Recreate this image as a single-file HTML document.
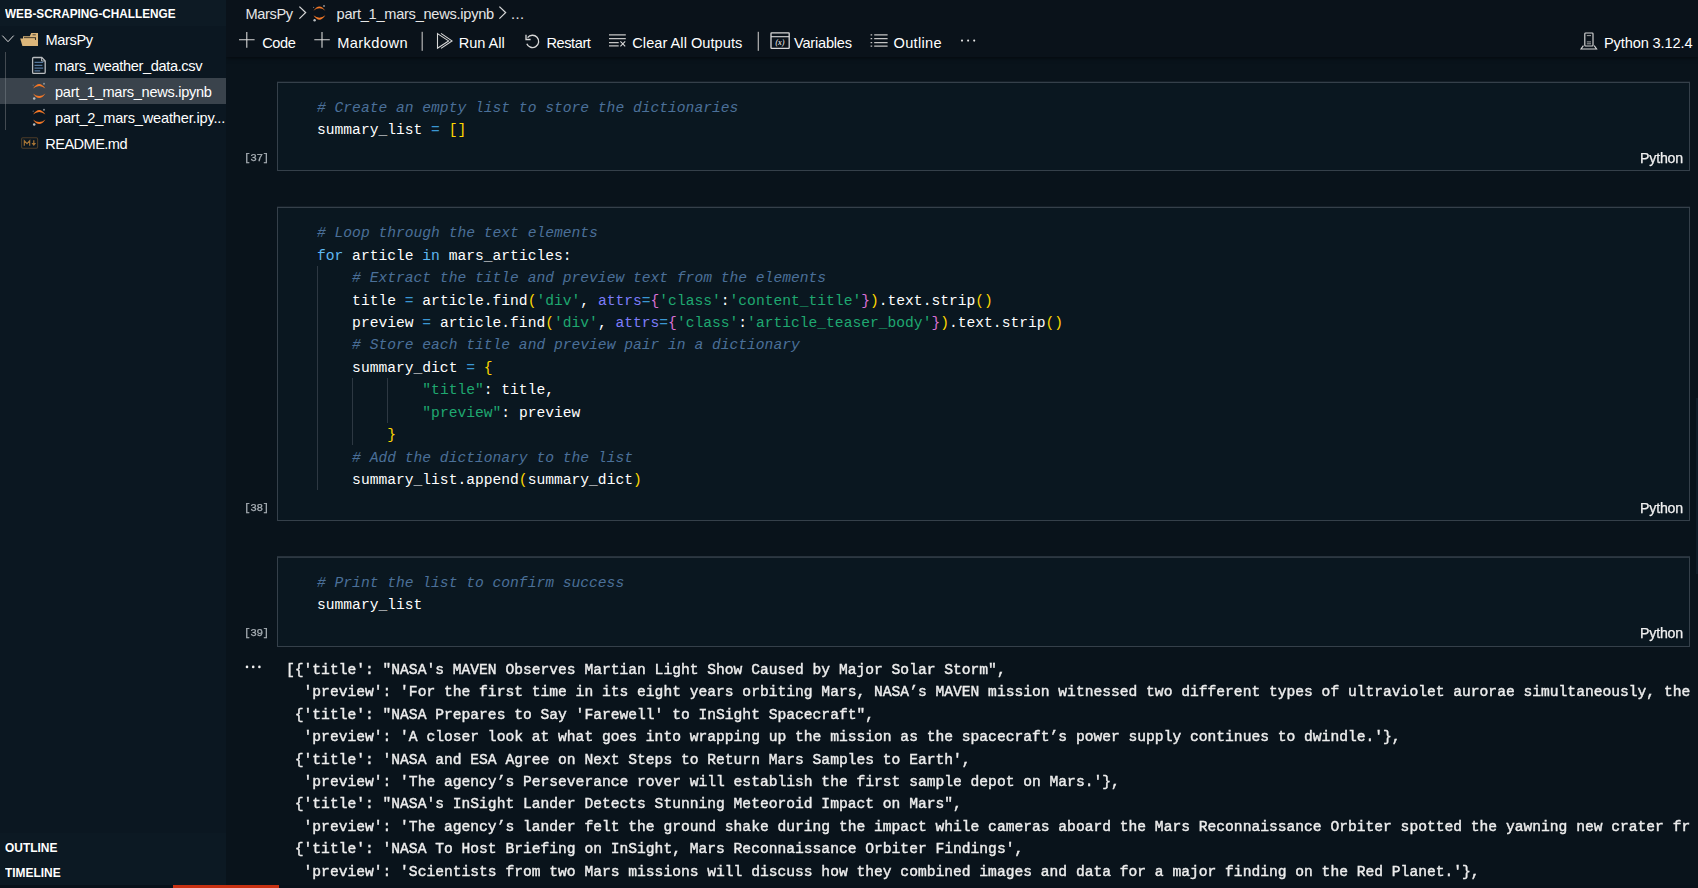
<!DOCTYPE html>
<html lang="en">
<head>
<meta charset="utf-8">
<title>part_1_mars_news.ipynb - Visual Studio Code</title>
<style>
*{box-sizing:border-box;margin:0;padding:0}
html,body{width:1698px;height:888px;overflow:hidden;background:#09131b}
body{position:relative;font-family:"Liberation Sans",sans-serif;color:#fff;font-size:14.6px}
.abs{position:absolute}
/* sidebar */
#side{position:absolute;left:0;top:0;width:226px;height:888px;background:#0b1721}
#side .hdr{position:absolute;left:5px;height:26px;font-weight:bold;font-size:13.2px;line-height:26px;white-space:nowrap;transform-origin:0 50%;transform:scaleX(0.892)}
#side .hdrbg{position:absolute;left:0;width:226px;height:26px;background:#0b1721}
.row{position:absolute;left:0;width:226px;height:26px;line-height:28px;white-space:nowrap;font-size:14.6px;letter-spacing:-0.2px}
.row.sel{background:#3a434c}
.row span.t{position:absolute;top:0}
.row svg{position:absolute}
/* editor */
#ed{position:absolute;left:226px;top:0;width:1472px;height:888px;background:#09131b;overflow:hidden}
#top{position:absolute;left:0;top:0;width:1472px;height:57px;background:#0a121a;box-shadow:0 1px 4px rgba(0,0,0,.55)}
.ui{position:absolute;white-space:nowrap;font-size:14.6px;line-height:20px;letter-spacing:-0.2px;color:#fff}
.bc{color:#e6e6e6}
.cell{position:absolute;left:51px;width:1413px;background:#0a1720;border:1px solid #35404a;box-shadow:0 -1px 0 rgba(53,64,74,.28)}
.code{position:absolute;left:91px;font-family:"Liberation Mono",monospace;font-size:14.63px;line-height:22.45px;white-space:pre;color:#fff}
.code div{height:22.45px}
.out{position:absolute;left:59.5px;font-family:"Liberation Mono",monospace;font-size:14.63px;line-height:22.4px;white-space:pre;color:#ededed;will-change:transform;-webkit-text-stroke:0.42px #ededed}
.out div{height:22.4px}
.cnt{will-change:transform;-webkit-text-stroke:0.25px #a9b0b6;position:absolute;font-family:"Liberation Mono",monospace;font-size:11px;color:#a9b0b6;white-space:nowrap;line-height:12px;letter-spacing:-0.4px}
.lang{will-change:transform;-webkit-text-stroke:0.25px #f0f0f0;position:absolute;font-size:14.2px;color:#f0f0f0;white-space:nowrap;line-height:16px;letter-spacing:-0.2px}
.c{color:#4b7099;font-style:italic}
.k{color:#5fb8f2}
.o{color:#3b97d4}
.s{color:#1fa870}
.y{color:#ffd700}
.p{color:#da70d6}
.a{color:#7d7dfa}
.guide{position:absolute;width:1px;background:#2d3842}
</style>
</head>
<body>
<div id="side">
  <div class="hdrbg" style="top:0;background:#0d1a24"></div>
  <div class="hdr" style="top:1.2px">WEB-SCRAPING-CHALLENGE</div>
  <div class="row" style="top:26px"><span class="t" style="left:45.5px;letter-spacing:-0.38px">MarsPy</span></div>
  <div class="row" style="top:52px"><span class="t" style="left:54.8px;letter-spacing:-0.36px">mars_weather_data.csv</span></div>
  <div class="row sel" style="top:78px"><span class="t" style="left:55px;letter-spacing:-0.29px">part_1_mars_news.ipynb</span></div>
  <div class="row" style="top:104px"><span class="t" style="left:55px;letter-spacing:-0.19px">part_2_mars_weather.ipy...</span></div>
  <div class="row" style="top:130px"><span class="t" style="left:45.3px;letter-spacing:-0.56px">README.md</span></div>
  <div class="guide" style="left:5px;top:52px;height:78px;background:#434a51"></div><div class="guide" style="left:5px;top:78px;height:26px;background:#59626a"></div>
  <svg class="abs" style="left:0;top:26px" width="60" height="130" viewBox="0 26 60 130">
    <!-- chevron -->
    <path d="M2.3 35.6 L8 41.7 L13.7 35.6" fill="none" stroke="#dcdcdc" stroke-width="1"/>
    <!-- folder open -->
    <path d="M23 36.3 L29.8 36.3 L31.2 33 L38 33 L38 46 L23.2 46 Z" fill="#dcb67a"/>
    <rect x="32.5" y="34.1" width="3.3" height="1.3" fill="#6f6048"/>
    <path d="M24 37.8 L35.4 37.8 L35.4 40" fill="none" stroke="#2e2a22" stroke-width="1.1"/>
    <path d="M20.2 38.6 L34.8 38.6 L36.6 46 L22.4 46 Z" fill="#dcb67a"/>
    <!-- file icon -->
    <path d="M33.6 57.5 L41.8 57.5 L45.2 60.9 L45.2 72.2 Q45.2 73.4 44 73.4 L33.6 73.4 Q32.6 73.4 32.6 72.2 L32.6 58.6 Q32.6 57.5 33.6 57.5 Z" fill="none" stroke="#b9bcbf" stroke-width="1.3"/>
    <path d="M41.6 57.6 L41.6 61 L45 61" fill="none" stroke="#b9bcbf" stroke-width="1"/>
    <path d="M34.5 62.4 H43.2 M34.5 65.3 H42.4 M34.5 68.1 H43.2 M34.5 70.8 H40.2" stroke="#56779c" stroke-width="1.2" fill="none"/>
    <!-- jupyter 1 -->
    <g id="jup">
      <path d="M33 88.6 Q39.2 79.6 45.4 88.6 Q39.2 83.6 33 88.6 Z" fill="#f37726"/>
      <path d="M33 93.4 Q39.2 102.6 45.4 93.4 Q39.2 98.6 33 93.4 Z" fill="#f37726"/>
      <circle cx="44" cy="83.7" r="0.95" fill="#8f969c"/>
      <circle cx="33.2" cy="85.2" r="0.6" fill="#6a737b"/>
      <circle cx="34.2" cy="98.6" r="1.25" fill="#b9bdc1"/>
    </g>
    <use href="#jup" y="26"/>
    <!-- markdown -->
    <rect x="21.6" y="137.7" width="16" height="10.6" rx="1.2" fill="none" stroke="#4d3d28" stroke-width="1.1"/>
    <path d="M24.3 145.7 V140.7 L27 143.7 L29.7 140.7 V145.7" fill="none" stroke="#a87636" stroke-width="1.15"/>
    <path d="M33.8 140.2 V143.2" fill="none" stroke="#a87636" stroke-width="1.2"/><path d="M31.5 143 H36.1 L33.8 146 Z" fill="#a87636"/>
  </svg>
  <div class="hdrbg" style="top:833px;height:52px;background:#0c1923"></div>
  <div class="hdr" style="top:834.6px;transform:scaleX(0.905)">OUTLINE</div>
  <div class="hdr" style="top:860.4px;transform:scaleX(0.905)">TIMELINE</div>
</div>
<div id="ed"><div id="edc" style="position:absolute;left:-226px;top:0;width:1698px;height:888px">
  <div id="top" style="left:226px"></div>
  <!-- breadcrumbs -->
  <div class="ui bc" style="left:245.6px;top:3.7px;letter-spacing:-0.38px" id="bc1">MarsPy</div>
  <div class="ui bc" style="left:336.6px;top:3.7px;letter-spacing:-0.26px" id="bc2">part_1_mars_news.ipynb</div>
  <div class="ui bc" style="left:511px;top:3.7px;letter-spacing:0.4px" id="bc3">...</div>
  <!-- toolbar -->
  <div class="ui" style="left:262.2px;top:33.2px;letter-spacing:-0.40px" id="tb1">Code</div>
  <div class="ui" style="left:337.2px;top:33.2px;letter-spacing:0.43px" id="tb2">Markdown</div>
  <div class="ui" style="left:458.8px;top:33.2px;letter-spacing:-0.05px" id="tb3">Run All</div>
  <div class="ui" style="left:546.4px;top:33.2px;letter-spacing:-0.42px" id="tb4">Restart</div>
  <div class="ui" style="left:632.3px;top:33.2px;letter-spacing:0.03px" id="tb5">Clear All Outputs</div>
  <div class="ui" style="left:794px;top:33.2px;letter-spacing:-0.21px" id="tb6">Variables</div>
  <div class="ui" style="left:893.6px;top:33.2px;letter-spacing:0.28px" id="tb7">Outline</div>
  <div class="ui" style="left:1604px;top:33.2px;letter-spacing:-0.125px" id="tb8">Python 3.12.4</div>
  <svg class="abs" style="left:226px;top:0" width="1472" height="57" viewBox="226 0 1472 57">
    <g fill="none" stroke="#d8d8d8" stroke-width="1.1">
      <!-- breadcrumb chevrons -->
      <path d="M299.4 6.6 L305.6 12.6 L299.4 18.6" stroke-width="1.3"/>
      <path d="M499.4 6.6 L505.6 12.6 L499.4 18.6" stroke-width="1.3"/>
      <!-- plus icons -->
      <path d="M239 39.8 H254.6 M246.8 32 V47.7"/>
      <path d="M314.3 39.8 H329.8 M322 32 V47.7"/>
      <!-- run all -->
      <path d="M437.5 33.6 L448.6 40.9 L437.5 48.2 Z"/>
      <path d="M441 33.4 L452 40.9 L441 48.4"/>
      <!-- restart -->
      <path d="M527.6 37.7 A6.15 6.15 0 1 1 526.8 43.7" stroke-width="1.35"/>
      <path d="M526 34.8 V39.5 H530.6" stroke-width="1.3"/>
      <!-- clear all -->
      <path d="M609 34.9 H625.8 M609 38.7 H625.8 M609 42.5 H618.7 M609 45.9 H618.7" stroke-width="1.25" stroke="#c4c4c4"/>
      <path d="M620.4 41.4 L625.2 46.4 M625.2 41.4 L620.4 46.4" stroke-width="1.1"/>
      <!-- variables -->
      <rect x="771" y="32.9" width="18.2" height="15.4" rx="0.6"  stroke-width="1.3"/>
      <path d="M771 36.7 H789.2" stroke-width="1.1"/>
      <!-- outline -->
      <path d="M874.2 34.9 H887.6 M874.2 38.7 H887.6 M874.2 42.5 H887.6 M874.2 46.1 H887.6" stroke-width="1.25" stroke="#c4c4c4"/>
      <path d="M870.6 34.9 H872.2 M870.6 38.7 H872.2 M870.6 42.5 H872.2 M870.6 46.1 H872.2" stroke-width="1.25" stroke="#c4c4c4"/>
      <!-- kernel -->
      <rect x="1584.8" y="33" width="8.2" height="13" rx="0.8" stroke-width="1.15"/>
      <path d="M1583.4 45.6 L1581 49 H1596.6 L1594.2 45.6" stroke-width="1.1"/>
      <path d="M1586.8 35.6 H1591 M1586.8 41.9 H1591 M1586.8 43.8 H1591" stroke-width="0.9" stroke="#b0b0b0"/>
    </g>
    <!-- separators -->
    <rect x="421.6" y="31.8" width="1.2" height="19" fill="#b4b4b4"/>
    <rect x="757.7" y="31.8" width="1.2" height="19" fill="#b4b4b4"/>
    <!-- more dots -->
    <g fill="#e4e4e4"><circle cx="962" cy="40.6" r="1.05"/><circle cx="968.1" cy="40.6" r="1.05"/><circle cx="974.2" cy="40.6" r="1.05"/></g>
    <!-- variables (x) text -->
    <text x="780.1" y="45.1" font-family="Liberation Serif, serif" font-style="italic" font-size="7.6" font-weight="bold" fill="#d8d8d8" text-anchor="middle" letter-spacing="0.3">(x)</text>
    <!-- jupyter breadcrumb -->
    <g transform="translate(319.4 13) scale(0.96) translate(-39.2 -91)">
      <path d="M33 88.6 Q39.2 79.6 45.4 88.6 Q39.2 83.6 33 88.6 Z" fill="#f37726"/>
      <path d="M33 93.4 Q39.2 102.6 45.4 93.4 Q39.2 98.6 33 93.4 Z" fill="#f37726"/>
      <circle cx="44" cy="83.7" r="0.95" fill="#8f969c"/>
      <circle cx="33.2" cy="85.2" r="0.6" fill="#6a737b"/>
      <circle cx="34.2" cy="98.6" r="1.25" fill="#b9bdc1"/>
    </g>
  </svg>

  <!-- cell 1 -->
  <div class="cell" style="left:277px;top:82px;height:89px"></div>
  <div class="code" style="left:317px;top:96.8px"><div><span class="c"># Create an empty list to store the dictionaries</span></div><div>summary_list <span class="o">=</span> <span class="y">[]</span></div></div>
  <div class="cnt" style="left:244.4px;top:152px">[37]</div>
  <div class="lang" style="left:1640.4px;top:150.3px">Python</div>

  <!-- cell 2 -->
  <div class="cell" style="left:277px;top:207px;height:314px"></div>
  <div class="guide" style="left:317px;top:266px;height:224px"></div>
  <div class="guide" style="left:352px;top:378px;height:67px"></div>
  <div class="guide" style="left:387px;top:378px;height:45px"></div>
  <div class="code" style="left:317px;top:222.2px"><div><span class="c"># Loop through the text elements</span></div><div><span class="k">for</span> article <span class="k">in</span> mars_articles:</div><div>    <span class="c"># Extract the title and preview text from the elements</span></div><div>    title <span class="o">=</span> article.find<span class="y">(</span><span class="s">'div'</span>, <span class="a">attrs</span><span class="o">=</span><span class="p">{</span><span class="s">'class'</span>:<span class="s">'content_title'</span><span class="p">}</span><span class="y">)</span>.text.strip<span class="y">()</span></div><div>    preview <span class="o">=</span> article.find<span class="y">(</span><span class="s">'div'</span>, <span class="a">attrs</span><span class="o">=</span><span class="p">{</span><span class="s">'class'</span>:<span class="s">'article_teaser_body'</span><span class="p">}</span><span class="y">)</span>.text.strip<span class="y">()</span></div><div>    <span class="c"># Store each title and preview pair in a dictionary</span></div><div>    summary_dict <span class="o">=</span> <span class="y">{</span></div><div>            <span class="s">"title"</span>: title,</div><div>            <span class="s">"preview"</span>: preview</div><div>        <span class="y">}</span></div><div>    <span class="c"># Add the dictionary to the list</span></div><div>    summary_list.append<span class="y">(</span>summary_dict<span class="y">)</span></div></div>
  <div class="cnt" style="left:244.4px;top:502px">[38]</div>
  <div class="lang" style="left:1640.4px;top:500.3px">Python</div>

  <!-- cell 3 -->
  <div class="cell" style="left:277px;top:557px;height:90px;box-shadow:0 -1px 0 rgba(53,64,74,.7);border-top-color:#2d3842"></div>
  <div class="code" style="left:317px;top:571.8px"><div><span class="c"># Print the list to confirm success</span></div><div>summary_list</div></div>
  <div class="cnt" style="left:244.4px;top:626.9px">[39]</div>
  <div class="lang" style="left:1640.4px;top:624.7px">Python</div>

  <!-- output -->
  <div class="out" style="left:286.3px;top:658.6px"><div>[{'title': "NASA's MAVEN Observes Martian Light Show Caused by Major Solar Storm",</div><div>  'preview': 'For the first time in its eight years orbiting Mars, NASA’s MAVEN mission witnessed two different types of ultraviolet aurorae simultaneously, the</div><div> {'title': "NASA Prepares to Say 'Farewell' to InSight Spacecraft",</div><div>  'preview': 'A closer look at what goes into wrapping up the mission as the spacecraft’s power supply continues to dwindle.'},</div><div> {'title': 'NASA and ESA Agree on Next Steps to Return Mars Samples to Earth',</div><div>  'preview': 'The agency’s Perseverance rover will establish the first sample depot on Mars.'},</div><div> {'title': "NASA's InSight Lander Detects Stunning Meteoroid Impact on Mars",</div><div>  'preview': 'The agency’s lander felt the ground shake during the impact while cameras aboard the Mars Reconnaissance Orbiter spotted the yawning new crater fr</div><div> {'title': 'NASA To Host Briefing on InSight, Mars Reconnaissance Orbiter Findings',</div><div>  'preview': 'Scientists from two Mars missions will discuss how they combined images and data for a major finding on the Red Planet.'},</div></div>
  <svg class="abs" style="left:240px;top:660px" width="30" height="14" viewBox="240 660 30 14"><g fill="#f2f2f2"><circle cx="247" cy="666.9" r="1.3"/><circle cx="253.2" cy="666.9" r="1.3"/><circle cx="259.4" cy="666.9" r="1.3"/></g></svg>
</div></div>
<div style="position:absolute;left:1696px;top:398px;width:2px;height:176px;background:#101d28"></div>
<div id="status" style="position:absolute;left:0;top:885px;width:1698px;height:3px;background:#08111a"><div style="position:absolute;left:173px;top:0;width:106px;height:3px;background:#c93112"></div></div>
</body>
</html>
